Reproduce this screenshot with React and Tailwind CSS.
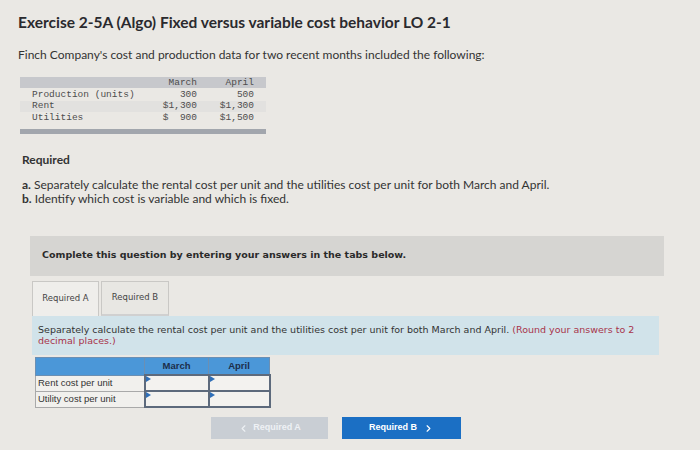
import { ChevronLeft, ChevronRight } from 'lucide-react';

const data = [
    { label: 'Production (units)', march: '300', april: '500' },
    { label: 'Rent', march: '$1,300', april: '$1,300' },
    { label: 'Utilities', march: '$  900', april: '$1,500' },
];

const answerRows = ['Rent cost per unit', 'Utility cost per unit'];

const InputCell = () => (
    <td className="relative border-2 border-[#5d6a7c] bg-[#f3f2ef] p-0">
        {/* little marker in the corner of each answer box */}
        <span className="absolute left-0 top-0 h-0 w-0 border-l-[5px] border-t-[3px] border-b-[3px] border-l-[#2f6fb8] border-t-transparent border-b-transparent" />
    </td>
);

const App = () => {
    return (
        <div className="w-[700px] h-[450px] overflow-hidden bg-[#eae8e4] text-[#2b2b2b] font-['Lato','Open_Sans',sans-serif]">
            {/* Header */}
            <div className="pl-[18px] pt-[13px]">
                <h1 className="text-[15.5px] font-bold leading-[18px] text-[#2a2a2e]">
                    Exercise 2-5A (Algo) Fixed versus variable cost behavior LO 2-1
                </h1>
                <p className="mt-[17px] text-[12px] leading-[14px] text-[#333]">
                    Finch Company's cost and production data for two recent months included the following:
                </p>
            </div>

            {/* Data table */}
            <div className="ml-[20px] mt-[15px] w-[246px] font-['Liberation_Mono',monospace] text-[9.5px] text-[#4d4d4d]">
                <div className="flex h-[11px] items-center bg-[#c7c8cc] pr-[12px] leading-[11px]">
                    <span className="flex-1" />
                    <span className="w-[45px] text-right">March</span>
                    <span className="w-[57px] text-right">April</span>
                </div>
                <div className="pt-[1px] pb-[5px]">
                    {data.map((row, i) => (
                        <div key={i} className={`flex h-[11.5px] items-center pl-[12px] pr-[12px] ${i === 1 ? 'bg-[#e2e1df]' : ''}`}>
                            <span className="flex-1">{row.label}</span>
                            <span className="w-[45px] text-right whitespace-pre">{row.march}</span>
                            <span className="w-[57px] text-right">{row.april}</span>
                        </div>
                    ))}
                </div>
                <div className="h-[5px] bg-[#a2a6ad]" />
            </div>

            {/* Required */}
            <div className="pl-[22px] pt-[19px] text-[12px] text-[#333]">
                <h3 className="font-bold leading-[14px]">Required</h3>
                <p className="mt-[11px] leading-[14px]"><b>a.</b> Separately calculate the rental cost per unit and the utilities cost per unit for both March and April.</p>
                <p className="leading-[14px]"><b>b.</b> Identify which cost is variable and which is fixed.</p>
            </div>

            {/* Question box */}
            <div className="ml-[30px] mt-[30px] w-[634px]">
                <div className="flex h-[40px] items-center bg-[#d6d5d2] pl-[12px] font-['DejaVu_Sans',sans-serif] text-[9.5px] font-bold text-[#2a2a2a]">
                    Complete this question by entering your answers in the tabs below.
                </div>

                {/* Tabs */}
                <div className="mt-[5px] flex gap-[2px] pl-[2px] font-['DejaVu_Sans',sans-serif] text-[8.5px] text-[#444]">
                    <div className="flex h-[35px] w-[67px] items-center justify-center border border-b-0 border-[#c9c8c5] bg-[#efeeeb]">
                        Required A
                    </div>
                    <div className="flex h-[35px] w-[68px] items-center justify-center border border-[#c9c8c5] border-b-2 border-b-[#d0d0d0] bg-[#e8e7e3]">
                        Required B
                    </div>
                </div>

                <div className="ml-[2px] w-[627px] bg-[#d1e3ea] px-[6px] pt-[8px] pb-[9px] font-['DejaVu_Sans',sans-serif] text-[9.5px] leading-[11px] text-[#333]">
                    Separately calculate the rental cost per unit and the utilities cost per unit for both March and April. <span className="text-[#a8344a]">(Round your answers to 2 decimal places.)</span>
                </div>

                {/* Answer table */}
                <table className="ml-[5px] mt-[2px] border-collapse font-['Liberation_Sans',sans-serif] text-[9.5px]">
                    <thead>
                        <tr className="h-[18px] bg-[#4b97d8] text-[#1c2e4a]">
                            <th className="w-[109px] border border-[#6b8fb3]" />
                            <th className="w-[64px] border border-[#6b8fb3] font-bold">March</th>
                            <th className="w-[61px] border border-[#6b8fb3] font-bold">April</th>
                        </tr>
                    </thead>
                    <tbody>
                        {answerRows.map((label) => (
                            <tr key={label} className="h-[16px]">
                                <td className="border border-[#a9a9a9] bg-[#f1f0ed] pl-[2px] text-[#333]">{label}</td>
                                <InputCell />
                                <InputCell />
                            </tr>
                        ))}
                    </tbody>
                </table>

                {/* Nav buttons */}
                <div className="ml-[181px] mt-[9px] flex gap-[14px] font-['Liberation_Sans',sans-serif] text-[9px] font-bold">
                    <button className="flex h-[22px] w-[117px] items-center justify-center gap-[4px] bg-[#c9ced4] text-[#eef1f4]">
                        <ChevronLeft className="h-[11px] w-[11px]" strokeWidth={2.5} />
                        Required A
                    </button>
                    <button className="flex h-[22px] w-[119px] items-center justify-center gap-[6px] bg-[#1b6fc4] text-white">
                        Required B
                        <ChevronRight className="h-[11px] w-[11px]" strokeWidth={2.5} />
                    </button>
                </div>
            </div>
        </div>
    );
};

export default App;
